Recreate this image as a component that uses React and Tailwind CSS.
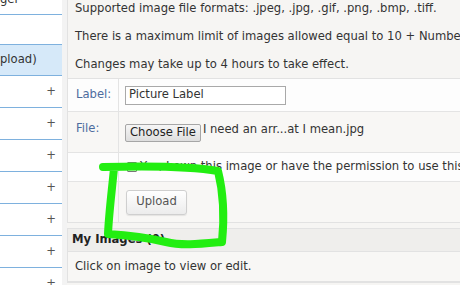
import React from 'react';

export default function App() {
  const plusRows = [0, 1, 2, 3, 4, 5, 6];

  return (
    <div className="relative w-[460px] h-[285px] overflow-hidden flex bg-[#f6f5f3] font-['DejaVu_Sans',sans-serif] text-[11.6px] text-[#333]">
      {/* Sidebar */}
      <div className="w-[62px] shrink-0 bg-white flex flex-col overflow-hidden">
        <div className="h-[15px] shrink-0 border-b border-[#7eb1de] flex items-start">
          <span className="leading-[14px] -mt-[8px] text-[#333]">ger</span>
        </div>
        <div className="h-[30px] shrink-0 border-b border-[#7eb1de]"></div>
        <div className="h-[31px] shrink-0 border-b border-[#7eb1de] bg-[#d6e9f9] flex items-center">
          <span className="text-[#333]">pload)</span>
        </div>
        {plusRows.map((i) => (
          <div key={i} className="h-[32px] shrink-0 border-b border-[#7eb1de] flex items-center justify-end pr-[6px] text-[#555]">
            +
          </div>
        ))}
      </div>

      <div className="w-[5px] shrink-0 bg-[#f3f3f3]"></div>

      {/* Main */}
      <div className="flex-1 min-w-0 flex flex-col">
        <div className="shrink-0 border-l border-[#e2e2e2] pl-[7px] pt-[1px] pb-[7px] flex flex-col gap-[14px] whitespace-nowrap">
          <p className="leading-[14px]">Supported image file formats: .jpeg, .jpg, .gif, .png, .bmp, .tiff.</p>
          <p className="leading-[14px]">There is a maximum limit of images allowed equal to 10 + Number of posts / 10</p>
          <p className="leading-[14px]">Changes may take up to 4 hours to take effect.</p>
        </div>

        {/* Form */}
        <div className="shrink-0 border border-r-0 border-[#e2e2e2] flex flex-col whitespace-nowrap">
          <div className="h-[33px] shrink-0 flex bg-[#fdfdfd] border-b border-[#e4e4e4]">
            <div className="w-[51px] shrink-0 border-r border-[#e4e4e4] pl-[8px] flex items-center text-[#4d6c9e]">Label:</div>
            <div className="flex items-center pl-[6px]">
              <div className="w-[161px] h-[19px] border border-[#a9a9a9] bg-white flex items-center px-[3px]">Picture Label</div>
            </div>
          </div>
          <div className="h-[41px] shrink-0 flex bg-[#f8f7f5] border-b border-[#e4e4e4]">
            <div className="w-[51px] shrink-0 border-r border-[#e4e4e4] pl-[8px] pt-[8px] text-[#4d6c9e]">File:</div>
            <div className="flex items-start pl-[6px] pt-[12px]">
              <div className="h-[18px] px-[4px] border border-[#a6a6a6] rounded-[2px] bg-gradient-to-b from-[#f6f6f6] to-[#dedede] flex items-center text-[#222]">Choose File</div>
              <span className="ml-[2px] -mt-[2px] leading-[14px]">I need an arr...at I mean.jpg</span>
            </div>
          </div>
          <div className="h-[29px] shrink-0 flex bg-[#fdfdfd] border-b border-[#e4e4e4]">
            <div className="w-[51px] shrink-0 border-r border-[#e4e4e4]"></div>
            <div className="flex items-center pl-[8px] gap-[3px]">
              <span className="w-[10px] h-[10px] border border-[#777] bg-white rounded-[1px] flex items-center justify-center text-[8px] leading-none">✓</span>
              <span>Yes, I own this image or have the permission to use this image.</span>
            </div>
          </div>
          <div className="h-[40px] shrink-0 flex bg-[#f8f7f5]">
            <div className="w-[51px] shrink-0 border-r border-[#e4e4e4]"></div>
            <div className="flex items-center pl-[7px]">
              <div className="w-[61px] h-[25px] border border-[#cfcfcf] rounded-[3px] bg-gradient-to-b from-[#ffffff] to-[#ececec] shadow-[0_1px_1px_rgba(0,0,0,0.08)] flex items-center justify-center text-[#555]">Upload</div>
            </div>
          </div>
        </div>

        <div className="h-[5px] shrink-0"></div>

        {/* My Images */}
        <div className="shrink-0 border border-r-0 border-[#e2e2e2] flex flex-col whitespace-nowrap">
          <div className="h-[23px] bg-[#efeeec] border-b border-[#e2e2e2] pl-[4px] flex items-center font-bold text-[#222]">My Images (0)</div>
          <div className="h-[30px] bg-[#f8f7f5] border-b border-[#e2e2e2] pl-[7px] flex items-center">Click on image to view or edit.</div>
        </div>
      </div>

      {/* Green scribble */}
      <svg className="absolute left-0 top-0 pointer-events-none" width="460" height="285" viewBox="0 0 460 285">
        <path
          d="M103,167 C140,166 190,166 218,171 C224,195 224,222 222,242 C200,244 182,246 166,242 C145,237 125,235 108,234 C109,212 112,190 114,168"
          fill="none"
          stroke="#22ee11"
          strokeWidth="8"
          strokeLinecap="round"
          strokeLinejoin="round"
        />
      </svg>
    </div>
  );
}
